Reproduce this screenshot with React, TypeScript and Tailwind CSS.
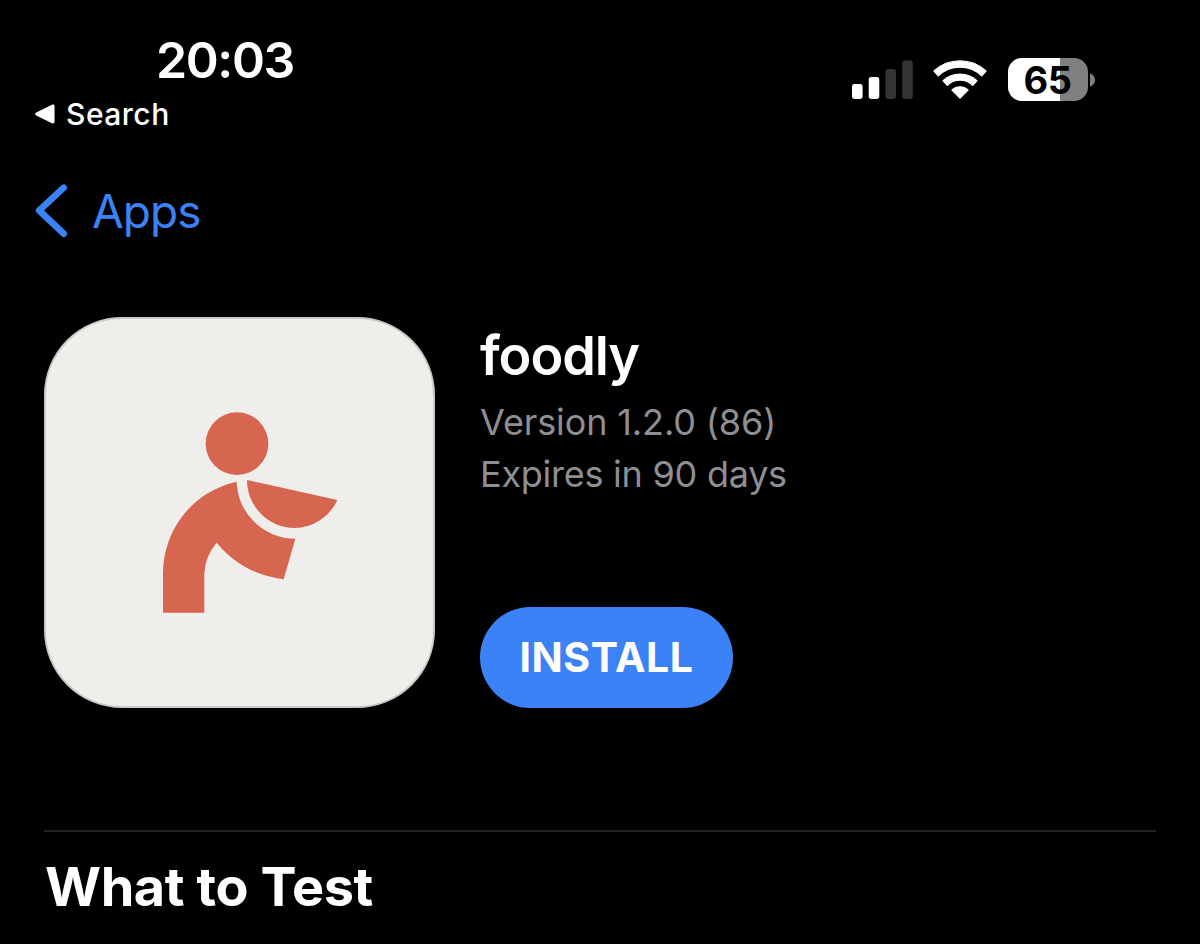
import React from 'react';

type SignalProps = {
  level: number;
};

const BARS = [
  { x: 0, height: 15 },
  { x: 16.7, height: 22 },
  { x: 33.4, height: 30 },
  { x: 50.2, height: 38.5 },
];

function Signal({ level }: SignalProps) {
  return (
    <svg className="h-[39px] w-[61px]" viewBox="0 0 61 39">
      {BARS.map((bar, i) => (
        <rect
          key={bar.x}
          x={bar.x}
          y={39 - bar.height}
          width="10.6"
          height={bar.height}
          rx="2.4"
          fill={i < level ? '#fff' : '#333'}
        />
      ))}
    </svg>
  );
}

function Wifi() {
  return (
    <svg className="-mt-0.5 h-10 w-[54px]" viewBox="-81 -119 162 120" fill="#fff" stroke="#fff" strokeWidth="4" strokeLinejoin="round">
      <path d="M-78 -83A116 116 0 0 1 78 -83L65 -68.5A94.5 94.5 0 0 0 -65 -68.5Z" />
      <path d="M-51 -54A75.5 75.5 0 0 1 51 -54L38 -40A54 54 0 0 0 -38 -40Z" />
      <path d="M-24 -26A35 35 0 0 1 24 -26L0 -2Z" />
    </svg>
  );
}

function Battery() {
  return (
    <div className="flex items-center gap-[2.5px]">
      <div className="flex h-[43px] w-[80px] items-center justify-center rounded-[14px] bg-[linear-gradient(90deg,#fff_0_51.7px,#808080_51.7px)]">
        <span className="text-[38px] leading-none font-bold tracking-[-0.5px] text-black">65</span>
      </div>
      <svg className="h-[14px] w-[5px]" viewBox="0 0 5 14">
        <path d="M0 0.5C3.2 1.7 5 4 5 7S3.2 12.3 0 13.5Z" fill="#808080" />
      </svg>
    </div>
  );
}

function StatusBar() {
  return (
    <header className="flex h-[134px] justify-between pt-[35px] pr-[105px] pl-[34px]">
      <div>
        <div className="pl-[122px] text-[50px] leading-[50px] font-semibold tracking-[-1.4px]">20:03</div>
        <div className="mt-[10px] flex h-[38px] items-center gap-[11px]">
          <svg className="h-5 w-[21px]" viewBox="0 0 21 20">
            <path
              d="M3 10L18.8 2.2V17.8Z"
              fill="#fff"
              stroke="#fff"
              strokeWidth="3.5"
              strokeLinejoin="round"
            />
          </svg>
          <span className="text-[30px] leading-none font-medium tracking-[0.5px]">Search</span>
        </div>
      </div>
      <div className="mt-[23px] flex h-[43px] items-center gap-[20.5px]">
        <Signal level={2} />
        <Wifi />
        <Battery />
      </div>
    </header>
  );
}

function Logo() {
  return (
    <svg className="size-full" viewBox="-282 -213 1161 1161" fill="#d66650">
      <circle cx="291" cy="161" r="94" />
      <path d="M321 270L592 330A142 142 0 0 1 463 414A144 144 0 0 1 321 270Z" />
      <path d="M69 668V550A281.6 281.6 0 0 1 290 275A175.5 175.5 0 0 0 466 446L431 568A300 300 0 0 1 230 458A155 155 0 0 0 193 550V668Z" />
    </svg>
  );
}

export default function App() {
  return (
    <main className="h-[944px] w-[1200px] overflow-hidden bg-black font-['Inter',sans-serif] text-white">
      <StatusBar />

      <nav className="mt-[48px] flex h-[57px] items-center gap-[23px] pl-[35px] text-[#3b82f6]">
        <svg className="h-[55px] w-[34px]" viewBox="0 0 34 55" fill="none">
          <path d="M28.7 4.7L4.2 27.5L28.7 50.7" stroke="currentColor" strokeWidth="6.6" strokeLinecap="round" strokeLinejoin="round" />
        </svg>
        <span className="text-[46px] leading-none tracking-[-0.9px]">Apps</span>
      </nav>

      <section className="mt-[78px] flex gap-[45px] pl-[44px]">
        <div className="size-[391px] overflow-hidden rounded-[78px] border-[2.5px] border-[#c9c9c9] bg-[#efeeea]">
          <Logo />
        </div>
        <div className="flex flex-col items-start pt-[11px]">
          <h1 className="text-[54px] leading-[56px] font-semibold tracking-[-1.1px]">foodly</h1>
          <div className="mt-[12px] text-[36px] leading-[52px] text-[#8e8e93]">
            <p className="tracking-[-0.12px]">Version 1.2.0 (86)</p>
            <p className="tracking-[-0.25px]">Expires in 90 days</p>
          </div>
          <button className="mt-auto flex h-[101px] w-[253px] items-center justify-center rounded-full bg-[#3b82f6] text-[41px] leading-none font-bold tracking-[0.5px]">
            INSTALL
          </button>
        </div>
      </section>

      <section className="mt-[122px] mr-[44px] ml-[44px] border-t-2 border-[#202022]">
        <h2 className="mt-[25px] pl-px text-[54px] leading-[60px] font-bold tracking-[-0.4px]">What to Test</h2>
      </section>
    </main>
  );
}
